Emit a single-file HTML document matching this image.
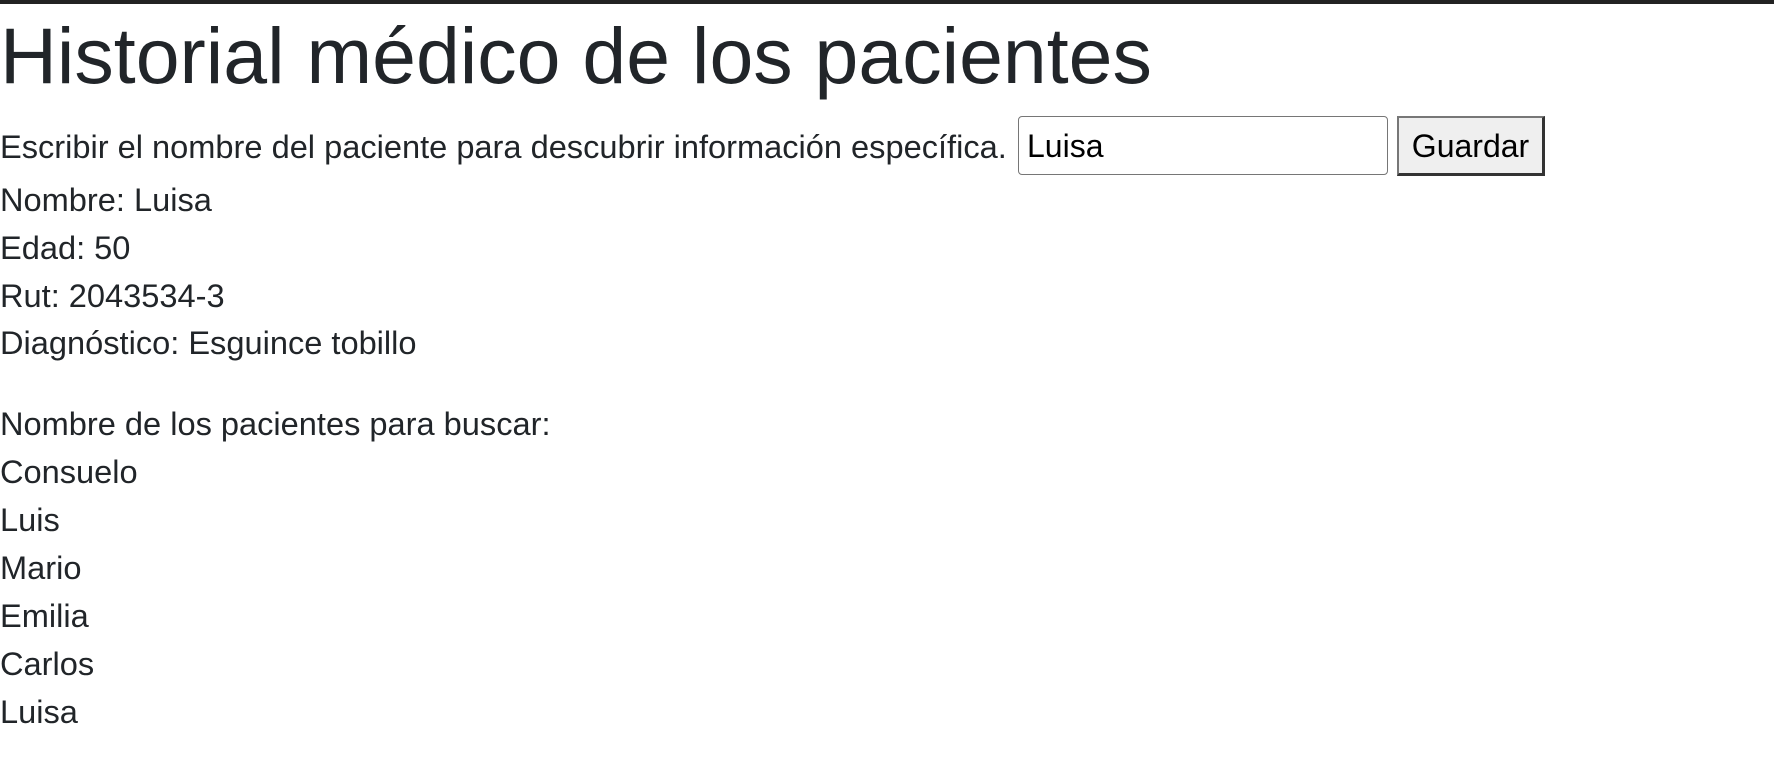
<!DOCTYPE html>
<html><head><meta charset="utf-8"><style>
html,body{margin:0;padding:0;background:#fff;width:1774px;height:782px;overflow:hidden}
body{font-family:"Liberation Sans",Arial,sans-serif;color:#212529;position:relative}
.bar{position:absolute;left:0;top:0;width:1774px;height:4px;background:#222}
.t{position:absolute;left:0;font-size:32.6px;line-height:48px;white-space:nowrap}
h1{position:absolute;left:0;top:16px;margin:0;font-size:78.8px;line-height:80px;font-weight:normal;white-space:nowrap}
.inp{position:absolute;left:1018px;top:116px;width:370px;height:59px;border:1.5px solid #767676;border-radius:4px;box-sizing:border-box;font-size:32px;line-height:59px;padding-left:8px;color:#000}
.btn{position:absolute;left:1397px;top:116px;width:148px;height:60px;box-sizing:border-box;background:#efefef;border:2px solid #333;border-top-color:#777;border-left-color:#777;border-right-width:3px;border-bottom-width:3px;font-size:32px;line-height:57px;text-align:center;color:#000}
</style></head><body>
<div class="bar"></div>
<h1>Historial médico de los pacientes</h1>
<div class="t" style="top:123px">Escribir el nombre del paciente para descubrir información específica.</div>
<div class="inp">Luisa</div>
<div class="btn">Guardar</div>
<div class="t" style="top:176px">Nombre: Luisa</div>
<div class="t" style="top:224px">Edad: 50</div>
<div class="t" style="top:272px">Rut: 2043534-3</div>
<div class="t" style="top:319px">Diagnóstico: Esguince tobillo</div>
<div class="t" style="top:400px">Nombre de los pacientes para buscar:</div>
<div class="t" style="top:448px">Consuelo</div>
<div class="t" style="top:496px">Luis</div>
<div class="t" style="top:544px">Mario</div>
<div class="t" style="top:592px">Emilia</div>
<div class="t" style="top:640px">Carlos</div>
<div class="t" style="top:688px">Luisa</div>
</body></html>
